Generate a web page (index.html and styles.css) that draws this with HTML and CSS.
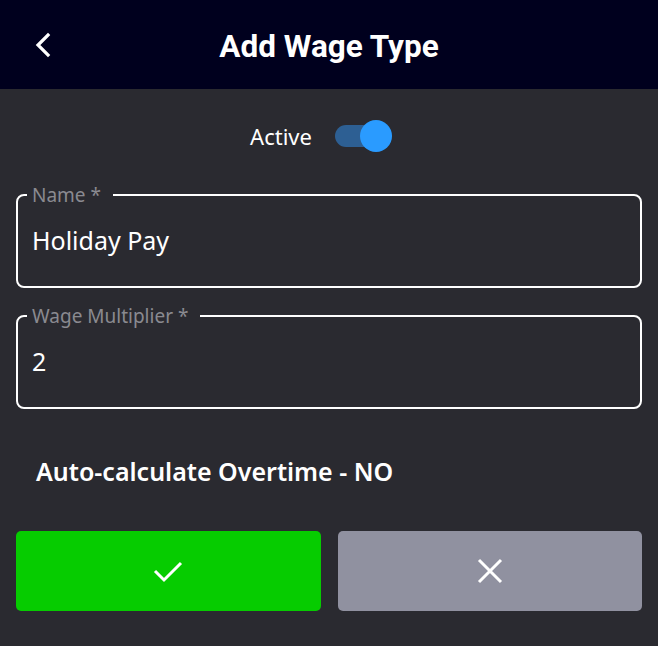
FILE: index.html
```html
<!DOCTYPE html>
<html lang="en">
<head>
  <meta charset="UTF-8">
  <title>Add Wage Type</title>
  <meta name="viewport" content="width=device-width, initial-scale=1.0">
  <link rel="stylesheet" href="styles.css">
</head>
<body>
  <header class="top-bar">
    <button class="back-btn" aria-label="Back">
      <svg width="20" height="26" viewBox="0 0 20 26"><path d="M15 3 L5 13 L15 23" fill="none" stroke="#fff" stroke-width="3.2" stroke-linecap="square"/></svg>
    </button>
    <h1>Add Wage Type</h1>
  </header>

  <main class="form">
    <div class="active-row">
      <span>Active</span>
      <div class="toggle on"><div class="knob"></div></div>
    </div>

    <fieldset class="field">
      <legend>Name *</legend>
      <input type="text" value="Holiday Pay">
    </fieldset>

    <fieldset class="field">
      <legend>Wage Multiplier *</legend>
      <input type="text" value="2">
    </fieldset>

    <div class="overtime">Auto-calculate Overtime - NO</div>

    <div class="actions">
      <button class="btn ok" aria-label="Save">
        <svg width="32" height="26" viewBox="0 0 32 26"><path d="M3 13 L12 22 L29 5" fill="none" stroke="#fff" stroke-width="3"/></svg>
      </button>
      <button class="btn cancel" aria-label="Cancel">
        <svg width="26" height="26" viewBox="0 0 26 26"><path d="M2 2 L24 24 M24 2 L2 24" fill="none" stroke="#fff" stroke-width="3"/></svg>
      </button>
    </div>
  </main>
</body>
</html>
```

FILE: styles.css
```css
* {
  box-sizing: border-box;
}

body {
  margin: 0;
  background: #2a2a30;
  font-family: 'Noto Sans', sans-serif;
  color: #fff;
}

.top-bar {
  height: 89px;
  background: #00001e;
  display: flex;
  align-items: center;
  justify-content: center;
  position: relative;
}

.top-bar h1 {
  margin: 0;
  font-family: Roboto, sans-serif;
  font-weight: 700;
  font-size: 31.5px;
  padding-top: 3px;
}

.back-btn {
  position: absolute;
  left: 33px;
  top: 32px;
  background: none;
  border: none;
  padding: 0;
  cursor: pointer;
}

.form {
  padding: 0 16px;
}

.active-row {
  display: flex;
  justify-content: center;
  align-items: center;
  gap: 23px;
  height: 95px;
  font-size: 22px;
  padding-right: 17px;
  padding-bottom: 2px;
}

.toggle {
  width: 56px;
  height: 22px;
  border-radius: 11px;
  background: #2d5f93;
  position: relative;
}

.knob {
  position: absolute;
  right: -1px;
  top: -5px;
  width: 32px;
  height: 32px;
  border-radius: 50%;
  background: #2a9bff;
}

.field {
  margin: 0 0 17px;
  padding: 0 14px 29px;
  border: 2px solid #fff;
  border-radius: 8px;
  min-width: 0;
}

.field legend {
  color: #8a8a90;
  font-size: 19px;
  line-height: 22px;
  padding: 0 12px 0 5px;
  margin-left: -5px;
}

.field input {
  display: block;
  width: 100%;
  background: none;
  border: none;
  outline: none;
  color: #fff;
  font-family: 'Noto Sans', sans-serif;
  font-size: 25px;
  padding: 0;
  margin-top: 17px;
  height: 34px;
}

.overtime {
  font-size: 25px;
  font-weight: 600;
  line-height: 34px;
  padding: 28px 0 0 20px;
  height: 105px;
}

.actions {
  display: flex;
  gap: 17px;
}

.btn {
  flex: 1;
  height: 80px;
  border: none;
  border-radius: 5px;
  display: flex;
  align-items: center;
  justify-content: center;
  cursor: pointer;
}

.btn.ok {
  background: #06cc00;
}

.btn.cancel {
  background: #9091a0;
}
```
